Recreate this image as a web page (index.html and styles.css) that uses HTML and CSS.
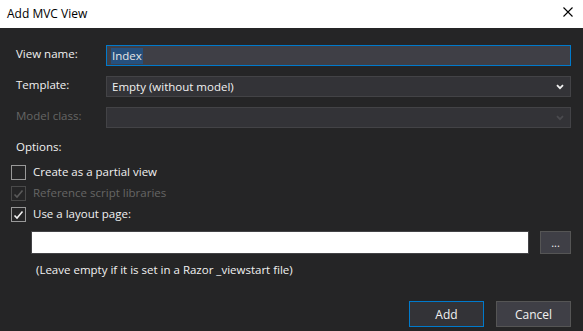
FILE: index.html
```html
<!DOCTYPE html>
<html>
<head>
<meta charset="utf-8">
<link rel="stylesheet" href="styles.css">
</head>
<body>
<div class="dialog">
  <div class="titlebar">
    <span class="title">Add MVC View</span>
    <svg class="close" width="10" height="10" viewBox="0 0 10 10"><path d="M0.5 0.5L9.5 9.5M9.5 0.5L0.5 9.5" stroke="#000" stroke-width="1.1"/></svg>
  </div>
  <div class="content">
    <div class="fields">
      <div class="row">
        <span class="label">View name:</span>
        <div class="field input focused"><span class="sel">Index</span></div>
      </div>
      <div class="row">
        <span class="label">Template:</span>
        <div class="field select"><span class="value">Empty (without model)</span>
          <svg class="chev" width="8" height="6" viewBox="0 0 8 6"><path d="M1 1.2L4 4.2L7 1.2" stroke="#f1f1f1" stroke-width="1.8" fill="none"/></svg>
        </div>
      </div>
      <div class="row">
        <span class="label disabled">Model class:</span>
        <div class="field select dis">
          <svg class="chev" width="8" height="6" viewBox="0 0 8 6"><path d="M1 1.2L4 4.2L7 1.2" stroke="#4a4a4e" stroke-width="1.8" fill="none"/></svg>
        </div>
      </div>
    </div>
    <div class="options-label">Options:</div>
    <div class="checks">
      <div class="check">
        <span class="box"></span><span class="ctext">Create as a partial view</span>
      </div>
      <div class="check disabled">
        <span class="box"><svg width="11" height="10" viewBox="0 0 11 10"><path d="M1.5 5.5L4 8L9.5 1.5" stroke="#5a5a5a" stroke-width="1.6" fill="none"/></svg></span><span class="ctext">Reference script libraries</span>
      </div>
      <div class="check">
        <span class="box"><svg width="11" height="10" viewBox="0 0 11 10"><path d="M1.5 5.5L4 8L9.5 1.5" stroke="#f1f1f1" stroke-width="1.6" fill="none"/></svg></span><span class="ctext">Use a layout page:</span>
      </div>
    </div>
    <div class="layout-row">
      <div class="layout-input"></div>
      <div class="browse">...</div>
    </div>
    <div class="hint">(Leave empty if it is set in a Razor _viewstart file)</div>
    <div class="buttons">
      <div class="btn primary">Add</div>
      <div class="btn">Cancel</div>
    </div>
  </div>
</div>
</body>
</html>
```
FILE: styles.css
```css
* { box-sizing: border-box; }
html, body { margin: 0; padding: 0; }
body {
  width: 583px;
  height: 331px;
  overflow: hidden;
  background: #252526;
  font-family: "Open Sans", "Noto Sans", sans-serif;
  font-size: 11.5px;
  color: #f1f1f1;
}
.dialog { width: 583px; height: 331px; display: flex; flex-direction: column; }
.titlebar {
  height: 28px;
  background: #ffffff;
  display: flex;
  align-items: center;
  justify-content: space-between;
  padding: 0 10px 0 7px;
  color: #000;
  font-size: 12px;
}
.title { margin-top: -2px; }
.close { margin-top: -4px; }
.content { padding: 17px 12px 0 11px; display: flex; flex-direction: column; }
.fields { display: flex; flex-direction: column; gap: 10px; padding-left: 5px; }
.row { display: flex; align-items: center; height: 21px; }
.label { width: 90px; flex: none; margin-top: -4px; }
.label.disabled { color: #656565; }
.field { flex: 1; height: 21px; display: flex; align-items: center; }
.input { background: #3f3f46; border: 1px solid #007acc; padding-left: 4px; }
.sel { background: #26507d; color: #e6e6e6; padding: 0 1px; line-height: 16px; }
.select { background: #333337; border: 1px solid #434346; padding: 0 6px 0 5px; justify-content: space-between; }
.select.dis { justify-content: flex-end; }
.chev { margin-top: 1px; }
.options-label { padding-left: 5px; margin-top: 10px; height: 20px; line-height: 18px; }
.checks { display: flex; flex-direction: column; gap: 6px; margin-top: 7px; }
.check { display: flex; align-items: center; height: 15px; }
.box {
  width: 15px; height: 15px; border: 1px solid #999999; flex: none;
  display: flex; align-items: center; justify-content: center;
  margin-right: 7px;
}
.check.disabled .box { border-color: #4a4a4a; }
.check.disabled .ctext { color: #656565; }
.ctext { margin-top: -3px; }
.layout-row { display: flex; margin-top: 9px; margin-left: 20px; height: 23px; }
.layout-input { width: 498px; background: #ffffff; border: 1px solid #434346; }
.browse {
  margin-left: 11px; width: 31px; background: #3f3f46; border: 1px solid #555555;
  font-size: 11px; display: flex; align-items: center; justify-content: center; line-height: 1;
}
.hint { margin-left: 25px; margin-top: 7px; height: 18px; line-height: 18px; }
.buttons { display: flex; justify-content: flex-end; gap: 12px; margin-top: 22px; }
.btn {
  width: 75px; height: 26px; background: #3f3f46; border: 1px solid #555555;
  display: flex; align-items: center; justify-content: center; font-size: 12px;
}
.btn.primary { border-color: #007acc; background: #333337; }
```
